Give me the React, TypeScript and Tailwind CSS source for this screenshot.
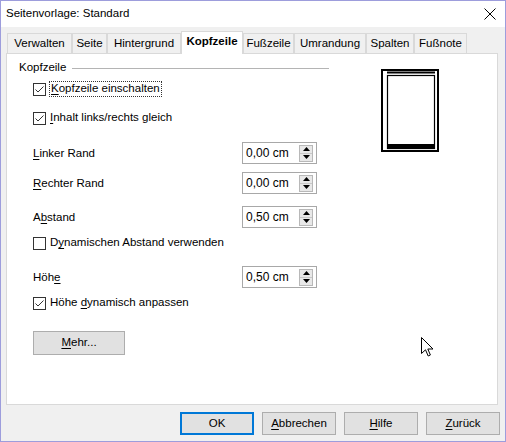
import type { ReactNode } from 'react';

const tabs = [
  { label: 'Verwalten', w: 'w-[65px]' },
  { label: 'Seite', w: 'w-[35px]' },
  { label: 'Hintergrund', w: 'w-[74px]' },
  { label: 'Kopfzeile', w: 'w-[62px]', active: true },
  { label: 'Fußzeile', w: 'w-[51px]' },
  { label: 'Umrandung', w: 'w-[72px]' },
  { label: 'Spalten', w: 'w-[48px]' },
  { label: 'Fußnote', w: 'w-[53px]' },
];

function U({ children }: { children: ReactNode }) {
  return <span className="underline underline-offset-2">{children}</span>;
}

function CheckBox({ checked }: { checked?: boolean }) {
  return (
    <span className="flex h-[13px] w-[13px] flex-none items-center justify-center border border-[#333333] bg-white">
      {checked && (
        <svg width="11" height="11" viewBox="0 0 11 11" fill="none" stroke="#333333" strokeWidth="1">
          <polyline points="1.5 5.5 4 8 9.5 2.5" />
        </svg>
      )}
    </span>
  );
}

function CheckRow({ checked, focused, className, children }: { checked?: boolean; focused?: boolean; className: string; children: ReactNode }) {
  return (
    <div className={`flex h-[16px] items-center pl-[14px] ${className}`}>
      <CheckBox checked={checked} />
      <span
        className={`ml-[3px] flex h-[16px] items-center px-[1px] ${
          focused ? 'border border-dotted border-[#333333]' : ''
        }`}
      >
        <span>{children}</span>
      </span>
    </div>
  );
}

function SpinField({ value }: { value: string }) {
  return (
    <div className="flex h-[22px] w-[75px] flex-none items-center justify-between border border-[#a8a8a8] bg-white pl-[3px] pr-[3px]">
      <span className="text-[12px]">{value}</span>
      <div className="flex h-[17px] w-[14px] flex-col border border-[#b8b8b8] bg-[#e8e8e8]">
        <div className="flex flex-1 items-center justify-center border-b border-[#c8c8c8]">
          <svg width="7" height="4" viewBox="0 0 7 4">
            <polygon points="0,4 3.5,0 7,4" fill="#000" />
          </svg>
        </div>
        <div className="flex flex-1 items-center justify-center">
          <svg width="7" height="4" viewBox="0 0 7 4">
            <polygon points="0,0 3.5,4 7,0" fill="#000" />
          </svg>
        </div>
      </div>
    </div>
  );
}

function SpinRow({ label, value, className }: { label: ReactNode; value: string; className: string }) {
  return (
    <div className={`flex h-[22px] items-center pl-[14px] ${className}`}>
      <span className="w-[209px] flex-none pt-[1px]">{label}</span>
      <SpinField value={value} />
    </div>
  );
}

function DialogButton({ children, primary }: { children: ReactNode; primary?: boolean }) {
  return (
    <button
      className={`flex h-[23px] w-[74px] items-center justify-center bg-[#e1e1e1] ${
        primary ? 'border-2 border-[#0078d7]' : 'border border-[#adadad]'
      }`}
    >
      <span>{children}</span>
    </button>
  );
}

export default function App() {
  return (
    <div className="relative flex h-[442px] w-[506px] flex-col border border-[#9d9ddc] bg-[#f0f0f0] font-['Liberation_Sans',Arial,sans-serif] text-[11.5px] leading-none text-black">
      {/* Title bar */}
      <div className="flex h-[26px] flex-none items-center justify-between bg-white pb-[1px] pl-[5px] pr-[9px]">
        <span className="text-[11.5px]">Seitenvorlage: Standard</span>
        <svg width="12" height="12" viewBox="0 0 12 12" stroke="#000" strokeWidth="1">
          <line x1="0.5" y1="0.5" x2="11.5" y2="11.5" />
          <line x1="11.5" y1="0.5" x2="0.5" y2="11.5" />
        </svg>
      </div>

      <div className="flex flex-1 flex-col pl-[5px] pr-[7px] pt-[4px]">
        {/* Tabs */}
        <div className="flex h-[22px] items-end pl-[1px]">
          {tabs.map((t) =>
            t.active ? (
              <div
                key={t.label}
                className={`relative z-10 -mb-[1px] flex h-[23px] ${t.w} items-center justify-center border border-b-0 border-[#d9d9d9] bg-white pb-[2px] font-bold`}
              >
                {t.label}
              </div>
            ) : (
              <div
                key={t.label}
                className={`flex h-[20px] ${t.w} items-center justify-center border border-b-0 border-[#d9d9d9] bg-[#f0f0f0]`}
              >
                {t.label}
              </div>
            )
          )}
        </div>

        {/* Page */}
        <div className="flex h-[352px] items-start border border-[#d9d9d9] bg-white pl-[12px] pt-[6px]">
          <div className="flex w-[310px] flex-none flex-col">
            <div className="flex h-[16px] items-center">
              <span>Kopfzeile</span>
              <div className="ml-[6px] h-px flex-1 bg-[#b4b4b4]" />
            </div>

            <CheckRow checked focused className="mt-[5px]">
              <U>K</U>opfzeile einschalten
            </CheckRow>
            <CheckRow checked className="mt-[13px]">
              <U>I</U>nhalt links/rechts gleich
            </CheckRow>

            <SpinRow className="mt-[16px]" label={<><U>L</U>inker Rand</>} value="0,00 cm" />
            <SpinRow className="mt-[8px]" label={<><U>R</U>echter Rand</>} value="0,00 cm" />
            <SpinRow className="mt-[12px]" label={<>A<U>b</U>stand</>} value="0,50 cm" />

            <CheckRow className="mt-[7px]">
              D<U>y</U>namischen Abstand verwenden
            </CheckRow>

            <SpinRow className="mt-[15px]" label={<>Höh<U>e</U></>} value="0,50 cm" />

            <CheckRow checked className="mt-[7px]">
              Höhe <U>d</U>ynamisch anpassen
            </CheckRow>

            <div className="mt-[20px] pl-[14px]">
              <button className="flex h-[24px] w-[92px] items-center justify-center border border-[#adadad] bg-[#e1e1e1]">
                <span>
                  <U>M</U>ehr...
                </span>
              </button>
            </div>
          </div>

          {/* Header preview */}
          <svg className="ml-[52px] mt-[9px] flex-none" width="58" height="83" viewBox="0 0 58 83">
            <rect x="1" y="1" width="56" height="81" fill="#fff" stroke="#000" strokeWidth="2" />
            <rect x="6" y="2.5" width="48" height="2" fill="#000" />
            <rect x="6.5" y="6.5" width="47" height="73" fill="none" stroke="#000" strokeWidth="1.2" />
            <rect x="6" y="75" width="48" height="4" fill="#000" />
          </svg>
        </div>

        {/* Dialog buttons */}
        <div className="-mr-[2px] mt-[7px] flex justify-end gap-[8px]">
          <DialogButton primary>OK</DialogButton>
          <DialogButton>
            <U>A</U>bbrechen
          </DialogButton>
          <DialogButton>
            <U>H</U>ilfe
          </DialogButton>
          <DialogButton>
            <U>Z</U>urück
          </DialogButton>
        </div>
      </div>

      {/* Mouse pointer */}
      <svg className="absolute left-[420px] top-[336px]" width="13" height="21" viewBox="0 0 13 21">
        <path
          d="M0.5 0.5 L0.5 16.5 L4.5 12.8 L7.2 19 L9.4 18 L6.8 12 L12 12 Z"
          fill="#fff"
          stroke="#000"
          strokeWidth="1"
          strokeLinejoin="miter"
        />
      </svg>
    </div>
  );
}
